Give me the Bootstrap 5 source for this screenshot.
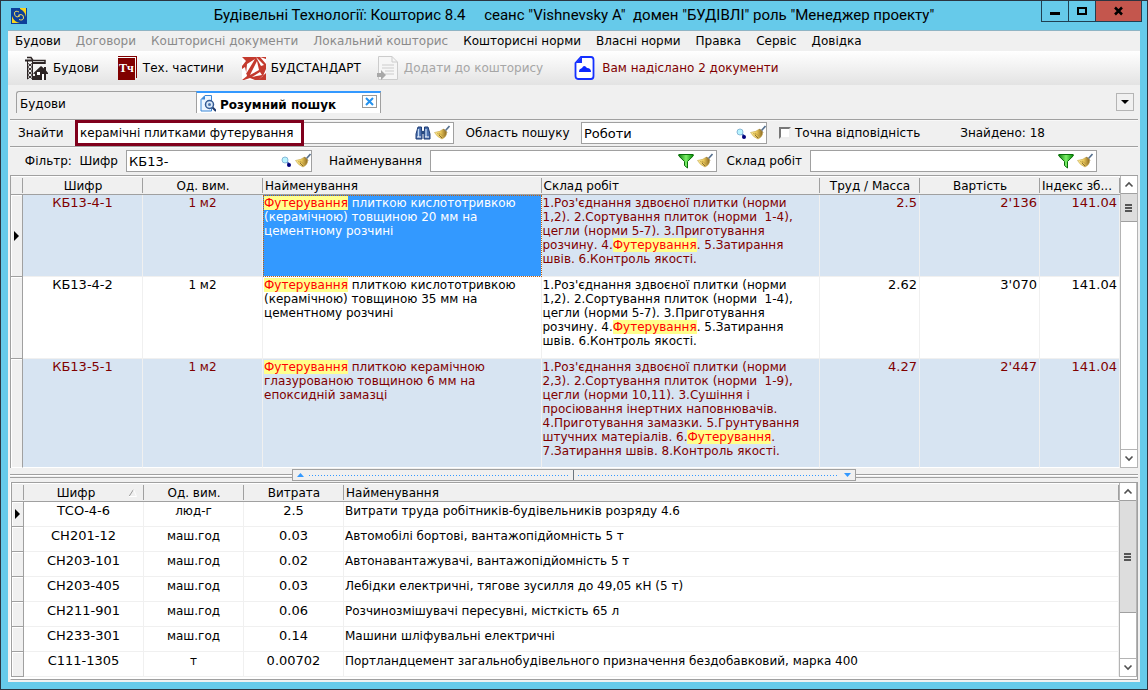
<!DOCTYPE html>
<html lang="uk">
<head>
<meta charset="utf-8">
<meta name="viewport" content="width=device-width, initial-scale=1">
<title>Будівельні Технології: Кошторис 8.4</title>
<link href="https://cdn.jsdelivr.net/npm/bootstrap@5.3.0/dist/css/bootstrap.min.css" rel="stylesheet">
<style>
:root{--line:#a0a0a0;--face:#f0f0f0;--sky:#66caea;--row:#d7e4f2;--wine:#800000}
body{font:12px/14px "DejaVu Sans",Verdana,sans-serif;color:#000;background:var(--sky)}
button,input{font:inherit;color:inherit}
.window{border:1px solid #2b3440;background:var(--sky);padding:0 7px 7px}
.titlebar{height:29px}
.titlebar h1{font:15px/29px Roboto,"Open Sans",sans-serif;white-space:pre;margin:0}
.winbtns{right:5px;top:0}
.winbtns button{height:21px;width:28px;padding:0;border:1px solid #1f3f52;border-top:0;background:transparent;margin-left:-1px}
.winbtns .close-btn{width:47px;background:#c4564d}
.client{background:var(--face);border-top:1px solid #8fb4c4;padding-bottom:2px}
.menubar{height:20px;padding:0 7px;gap:15px}
.menubar a{color:#000;text-decoration:none;white-space:nowrap}
.menubar a.off{color:#8a8a8a}
.tools{height:34px;background:linear-gradient(#fff,#e3e3e3)}
.tools button{border:0;background:none;padding:0;white-space:nowrap;gap:5px;margin-right:18px}
.tools button.wide{margin-right:30px}
.tools button:disabled{color:#a6a6a6}
.tools .notice{color:var(--wine)}
.tabs{height:34px;padding:6px 6px 0 8px}
.tab-item{height:22px;border:1px solid var(--line);border-bottom:0;padding:0 3px;background:var(--face);text-align:left;line-height:24px}
.tab-plain{width:180px;border-right:0;border-radius:3px 0 0 0}
.tab-on{width:185px;background:#fff;border-top:2px solid #39f;font-weight:bold}
.tab-x{width:15px;height:13px;border:1px solid #999;background:#fff;padding:0}
.drop{width:18px;height:18px;border:1px solid #b4b4b4;background:var(--face);padding:0;margin-top:2px}
.bar{display:grid;align-items:center;border-top:1px solid var(--line);margin:0 2px;box-shadow:inset 0 1px #f8f8f8}
.bar label,.bar output{white-space:nowrap}
.search{height:27px;grid-template-columns:65px 379fr 127px 186fr 371px}
.filter{height:29px;grid-template-columns:116px 186fr 118px 287fr 93px 287fr 41px}
.field{height:22px;border:1px solid var(--line);background:#fff;min-width:0}
.field input{border:0;background:transparent;padding:0 2px;min-width:0;height:20px;outline:0;font-size:13px}
.field .framed{flex:0 0 229px;height:26px;margin:-3px 0 -3px -1px;border:3px solid #80001c;background:#fff;font-size:12px}
.field button{border:0;background:none;padding:0;width:19px;height:16px}
.tick{appearance:none;width:12px;height:12px;background:#fff;border:2px solid;border-color:#777 #eee #eee #777;margin:0}
.pane{margin:0 2px;border-top:1px solid var(--line);border-left:1px solid var(--line)}
.grid{table-layout:fixed;border-collapse:separate;border-spacing:0;width:100%;background:#fff}
.grid th{height:19px;font-weight:normal;text-align:center;padding:1px 2px 0;background:linear-gradient(var(--line),var(--line)) right 2px/1px 15px no-repeat var(--face);border-bottom:1px solid var(--line);box-shadow:inset 0 1px #fff;white-space:nowrap;overflow:hidden}
.grid th.start{text-align:left}
.grid td{border-right:1px solid var(--face);border-bottom:1px solid var(--face);padding:1px 3px 0 1px;vertical-align:top;white-space:nowrap;overflow:hidden}
.grid td.sel{background:var(--face);border-right:1px solid var(--line);border-bottom:1px solid var(--line);box-shadow:inset 1px 1px #fff;padding:0;vertical-align:middle}
.grid td.c{text-align:center;padding-left:2px;padding-right:2px}.grid td.r{text-align:right;padding-right:2px}
.grid td.num{font-size:13px}
.norms td{height:82px}
.norms tr.alt td:not(.sel){background:var(--row);color:var(--wine)}
.norms tr.last td{height:109px;border-bottom-color:#fff}
.norms tr td.current:not(.sel){background:#39f;color:#fff;outline:1px dotted #c06010;outline-offset:-1px}
.hit{background:#ffff8c;color:#f00}
.res td{height:25px;padding-top:2px}
.scroller{width:18px;flex:none;background:#fff;border:1px solid #b4b4b4;border-top:0}
.scroller button{height:18px;width:16px;padding:0;border:0;background:#fff;line-height:0}
.scroller .up{border-bottom:1px solid var(--line)}
.scroller .down{border-top:1px solid #b4b4b4}
.thumb{height:28px;background:#ddd;border-bottom:1px solid var(--line);color:#555}
.thumb.long{height:112px}
.split{height:14px;margin:0 2px;background:linear-gradient(var(--line),var(--line)) 0 6px/100% 1px no-repeat,linear-gradient(#fff,#fff) 0 7px/100% 1px no-repeat,linear-gradient(var(--line),var(--line)) 0 9px/100% 1px no-repeat}
.grip{width:50%;height:12px;margin-top:1px;border:1px solid var(--line);background:var(--face)}
.grip span{height:10px;gap:5px}
.grip i{flex:1;height:1px;background:repeating-linear-gradient(90deg,#39f 0 1px,transparent 1px 3px)}
.lower{margin:0 2px;border:1px solid var(--line);border-top:0;border-left-color:#fff;background:#fff;padding:0 0 2px}
.lower .pane{margin:0}
svg{display:block;flex:none}
</style>
</head>
<body>
<svg width="0" height="0" class="position-absolute" aria-hidden="true">
<defs>
<linearGradient id="gold" x1="0" x2="1"><stop offset="0" stop-color="#fff0a0"/><stop offset=".5" stop-color="#ecca5c"/><stop offset="1" stop-color="#8d6a20"/></linearGradient>
<linearGradient id="leaf" x1="0" x2="1"><stop offset="0" stop-color="#0b7d0b"/><stop offset=".5" stop-color="#7df06a"/><stop offset="1" stop-color="#048a04"/></linearGradient>
<symbol id="broom" viewBox="0 0 16 16"><path d="M15.500 1 11.500 5.500" stroke="#56708e" stroke-width="1.600"/><path d="M9.500 4 12.500 7V9Q12 12 8 14Q3 12 .5 7.500Q6 7 9.500 4Z" fill="url(#gold)" stroke="#c2a550" stroke-width=".6"/><path d="M9.500 4 13 7.500M5 10 8 13" stroke="#7b6130" stroke-width=".9" fill="none"/><path d="M3 8.500 6 9.500M5 8 9 11" stroke="#b8953a" stroke-width=".7"/></symbol>
<symbol id="funnel" viewBox="0 0 16 16"><path d="M.8 1.500H15.200V3L9.500 8.500V15L6.500 12.500V8.500L.8 3Z" fill="url(#leaf)" stroke="#087008"/></symbol>
<symbol id="lens" viewBox="0 0 16 16"><path d="M9 9 11 11" stroke="#4a6cc0" stroke-width="2"/><circle cx="11" cy="12" r="2" fill="#00007b"/><circle cx="7" cy="7" r="3" fill="#b8f4ff" stroke="#86b8d8"/></symbol>
<symbol id="binoc" viewBox="0 0 16 16"><path d="M3 2H6.500V5L7 7V14H1V9Z M9.500 2H13L15 9V14H9V7L9.500 5Z" fill="#4a6fae" stroke="#1e3c74"/><path d="M6.500 6H9.500V9H6.500Z" fill="#27497f"/><path d="M3.500 4V12M11 4V12" stroke="#c6dcf5" stroke-width="1.300"/><path d="M2 12H6M10 12H14" stroke="#fff"/></symbol>
<symbol id="chev" viewBox="0 0 16 17"><path d="M4.500 10.500 8 7 11.500 10.500" fill="none" stroke="#505050" stroke-width="1.600"/></symbol>
<symbol id="mark-row" viewBox="0 0 6 10"><path d="M0 0V10L5 5Z"/></symbol>
</defs>
</svg>

<div class="window d-flex flex-column min-vh-100 position-relative">
<header class="titlebar d-flex align-items-center justify-content-center">
<svg class="position-absolute start-0 ms-2" width="18" height="16" viewBox="-2 0 18 16"><path fill="#0c3f9a" d="M0 0H16V16H0Z"/><path fill="#f7d41c" d="M9 0H15V9Q14 3 9 1ZM1 8V15H9Q3 14 1 8Z"/><path d="M8 4Q4 2 3.500 5T6 9Q9 9 8 6.500M8 11.500Q12 13 12.500 10T10 6.500Q7 6.500 8 9" fill="none" stroke="#f0d860"/></svg>
<h1>Будівельні Технології: Кошторис 8.4     сеанс "Vishnevsky A"  домен "БУДІВЛІ" роль "Менеджер проекту"</h1>
<div class="winbtns position-absolute d-flex">
<button type="button" aria-label="Згорнути"><svg width="26" height="20"><path d="M8 11H18V14H8Z"/></svg></button>
<button type="button" aria-label="Розгорнути"><svg width="26" height="20"><path d="M9 7H17V13H9Z" fill="none" stroke="#000" stroke-width="2"/></svg></button>
<button type="button" class="close-btn" aria-label="Закрити"><svg width="45" height="20"><path d="M19 6.500 26 13.500M26 6.500 19 13.500" stroke="#000" stroke-width="2.500"/></svg></button>
</div>
</header>

<main class="client flex-grow-1 d-flex flex-column">
<nav class="menubar d-flex align-items-center">
<a href="#">Будови</a><a href="#" class="off">Договори</a><a href="#" class="off">Кошторисні документи</a><a href="#" class="off">Локальний кошторис</a><a href="#">Кошторисні норми</a><a href="#">Власні норми</a><a href="#">Правка</a><a href="#">Сервіс</a><a href="#">Довідка</a>
</nav>

<div class="tools d-flex align-items-center ps-3">
<button type="button" class="d-flex align-items-center"><svg width="24" height="24" viewBox="0 0 24 24"><g fill="none" stroke="#2c2424" stroke-width="1"><path d="M3.500 4V23M8.500 4V23M3.500 7 8.500 11 3.500 15 8.500 19 3.500 23M8.500 7 3.500 11 8.500 15 3.500 19 8.500 23"/><path d="M3 1.500H7L9 4.500H21V8" stroke-width="1.500"/><path d="M1 4.500H8M9 7H21" stroke-width="2"/></g><path d="M9 17.500 17 10 20 12.500V11H22V14.500L24 17V18H22V24H11V18ZM8 20H11V24H8Z" fill="#2c2424"/><path d="M13 16H16V19H13ZM18 18H20V24H18Z" fill="#fff"/></svg>Будови</button>
<button type="button" class="d-flex align-items-center"><svg width="21" height="24" viewBox="0 0 21 24"><path fill="#800000" d="M1 0H20V22H19V1H1ZM1 2H18V24H1Z"/><text x="2" y="16" font-family="Liberation Serif,serif" font-size="12" font-weight="bold" fill="#fff">Тч</text></svg>Тех. частини</button>
<button type="button" class="d-flex align-items-center me-3"><svg width="24" height="24" viewBox="0 0 24 24"><path d="M0 1H24V24H0Z" fill="#c43a2e"/><path d="M0 1 4 5 0 10ZM14 1 22 9 19 10ZM24 3V8L18 1ZM0 13 3 11 5 20 0 24ZM2 24 8 22 13 24ZM16 24 24 17V13L21 20ZM13 3 5 8 4 18ZM15 5 17 14 8 19ZM18 16 20 19 10 21Z" fill="#fff"/></svg>БУДСТАНДАРТ</button>
<button type="button" disabled class="wide d-flex align-items-center"><svg width="22" height="24" viewBox="0 0 22 24"><path d="M1.500 .5H15L20.500 6V23.500H1.500Z" fill="#f6f6f6" stroke="#ccc"/><path d="M15 .5V6H20M5 9H17M5 12H17M8 15H17M8 18H17" fill="none" stroke="#ccc"/><path d="M0 17H4V14L9 19 4 24V21H0Z" fill="#a8a8a8"/></svg>Додати до кошторису</button>
<button type="button" class="notice d-flex align-items-center"><svg width="24" height="24" viewBox="-1 0 24 24"><path d="M7 1H17Q19.500 1 19.500 4V20Q19.500 23 17 23H4Q1.500 23 1.500 20V7Z" fill="#fff" stroke="#1430ff" stroke-width="1.800"/><path d="M8 1V7H2Z" fill="#1430ff"/><path d="M5 15Q5 13 8 12Q10 8 13 12Q17 12 17 16H5Z" fill="#0a28ff"/></svg>Вам надіслано 2 документи</button>
</div>

<div class="tabs d-flex align-items-start">
<button type="button" class="tab-item tab-plain">Будови</button>
<div class="tab-item tab-on d-flex align-items-center"><svg width="16" height="17" viewBox="0 0 16 17"><path d="M5 .5H11.500V16H1V4.500Z" fill="#eef6ff" stroke="#3a87d6"/><path d="M1 4.500H5V.5" fill="#3a87d6"/><path d="M12 12 16 16" stroke="#1f3a6d" stroke-width="2"/><circle cx="9.500" cy="9.500" r="4" fill="#d9e8f8" stroke="#345a92" stroke-width="1.500"/><circle cx="9.500" cy="9.500" r="1.500" fill="#4f76ac"/></svg><span class="px-1 pt-1 flex-grow-1">Розумний пошук</span><button type="button" class="tab-x mb-1" aria-label="Закрити вкладку"><svg width="13" height="11"><path d="M3 2 10 9M10 2 3 9" stroke="#2492ee" stroke-width="2"/></svg></button></div>
<button type="button" class="drop ms-auto" aria-label="Список вкладок"><svg width="16" height="16"><path d="M4 6H12L8 10Z"/></svg></button>
</div>

<div class="bar search">
<label for="find" class="ps-2">Знайти</label>
<div class="field d-flex align-items-center"><input id="find" class="framed" value="керамічні плитками футерування"><button type="button" class="ms-auto" aria-label="Шукати"><svg width="16" height="16"><use href="#binoc"/></svg></button><button type="button" aria-label="Очистити"><svg width="16" height="16"><use href="#broom"/></svg></button></div>
<label for="area" class="text-center">Область пошуку</label>
<div class="field d-flex align-items-center"><input id="area" class="flex-grow-1" value="Роботи"><button type="button" aria-label="Вибрати"><svg width="16" height="16"><use href="#lens"/></svg></button><button type="button" aria-label="Очистити"><svg width="16" height="16"><use href="#broom"/></svg></button></div>
<div class="d-flex align-items-center ps-2"><input type="checkbox" class="tick ms-1" id="exact"><label for="exact" class="ms-1">Точна відповідність</label><output class="ms-4 ps-3">Знайдено: 18</output></div>
</div>

<div class="bar filter">
<label for="code" class="text-end pe-2">Фільтр:&nbsp; Шифр</label>
<div class="field d-flex align-items-center"><input id="code" class="flex-grow-1" value="КБ13-"><button type="button" aria-label="Вибрати"><svg width="16" height="16"><use href="#lens"/></svg></button><button type="button" aria-label="Очистити"><svg width="16" height="16"><use href="#broom"/></svg></button></div>
<label for="name" class="text-end pe-2">Найменування</label>
<div class="field d-flex align-items-center"><input id="name" class="flex-grow-1"><button type="button" aria-label="Фільтрувати"><svg width="16" height="16"><use href="#funnel"/></svg></button><button type="button" aria-label="Очистити"><svg width="16" height="16"><use href="#broom"/></svg></button></div>
<label for="works" class="text-end pe-2">Склад робіт</label>
<div class="field d-flex align-items-center"><input id="works" class="flex-grow-1"><button type="button" aria-label="Фільтрувати"><svg width="16" height="16"><use href="#funnel"/></svg></button><button type="button" aria-label="Очистити"><svg width="16" height="16"><use href="#broom"/></svg></button></div>
</div>

<section class="pane d-flex">
<table class="grid norms">
<colgroup><col style="width:12px"><col style="width:120px"><col style="width:120px"><col><col><col style="width:100px"><col style="width:120px"><col style="width:80px"></colgroup>
<thead><tr><th></th><th>Шифр</th><th>Од. вим.</th><th class="start">Найменування</th><th class="start">Склад робіт</th><th>Труд / Масса</th><th>Вартість</th><th class="start">Індекс зб...</th></tr></thead>
<tbody>
<tr class="alt"><td class="sel"><svg class="mx-auto" width="6" height="10"><use href="#mark-row"/></svg></td><td class="c num">КБ13-4-1</td><td class="c">1 м2</td><td class="current"><span class="hit">Футерування</span> плиткою кислототривкою<br>(керамічною) товщиною 20 мм на<br>цементному розчині</td><td>1.Роз'єднання здвоєної плитки (норми<br>1,2). 2.Сортування плиток (норми&nbsp; 1-4),<br>цегли (норми 5-7). 3.Приготування<br>розчину. 4.<span class="hit">Футерування</span>. 5.Затирання<br>швів. 6.Контроль якості.</td><td class="r num">2.5</td><td class="r num">2'136</td><td class="r num">141.04</td></tr>
<tr><td class="sel"></td><td class="c num">КБ13-4-2</td><td class="c">1 м2</td><td><span class="hit">Футерування</span> плиткою кислототривкою<br>(керамічною) товщиною 35 мм на<br>цементному розчині</td><td>1.Роз'єднання здвоєної плитки (норми<br>1,2). 2.Сортування плиток (норми&nbsp; 1-4),<br>цегли (норми 5-7). 3.Приготування<br>розчину. 4.<span class="hit">Футерування</span>. 5.Затирання<br>швів. 6.Контроль якості.</td><td class="r num">2.62</td><td class="r num">3'070</td><td class="r num">141.04</td></tr>
<tr class="alt last"><td class="sel"></td><td class="c num">КБ13-5-1</td><td class="c">1 м2</td><td><span class="hit">Футерування</span> плиткою керамічною<br>глазурованою товщиною 6 мм на<br>епоксидній замазці</td><td>1.Роз'єднання здвоєної плитки (норми<br>2,3). 2.Сортування плиток (норми&nbsp; 1-9),<br>цегли (норми 10,11). 3.Сушіння і<br>просіювання інертних наповнювачів.<br>4.Приготування замазки. 5.Грунтування<br>штучних матеріалів. 6.<span class="hit">Футерування</span>.<br>7.Затирання швів. 8.Контроль якості.</td><td class="r num">4.27</td><td class="r num">2'447</td><td class="r num">141.04</td></tr>
</tbody>
</table>
<div class="scroller d-flex flex-column"><button type="button" class="up" aria-label="Вгору"><svg width="16" height="17"><use href="#chev"/></svg></button><div class="thumb d-flex align-items-center justify-content-center"><svg width="8" height="8" fill="currentColor"><path d="M0 0H7V2H0ZM0 3H7V5H0ZM0 6H7V8H0Z"/></svg></div><button type="button" class="down mt-auto" aria-label="Вниз"><svg width="16" height="17" style="transform:rotate(180deg)"><use href="#chev"/></svg></button></div>
</section>

<div class="split d-flex justify-content-center"><div class="grip d-flex"><span class="d-flex align-items-center w-50 px-1 border-end border-secondary"><svg width="7" height="4"><path d="M3.500 0 7 4H0Z" fill="#39f"/></svg><i></i></span><span class="d-flex align-items-center w-50 px-1"><i></i><svg width="7" height="4"><path d="M0 0H7L3.500 4Z" fill="#39f"/></svg></span></div></div>

<section class="lower flex-grow-1">
<div class="pane d-flex h-100">
<div class="flex-grow-1 bg-white">
<table class="grid res">
<colgroup><col style="width:12px"><col style="width:120px"><col style="width:100px"><col style="width:100px"><col></colgroup>
<thead><tr><th></th><th><div class="d-flex align-items-center justify-content-center position-relative pe-3">Шифр<svg class="position-absolute end-0 me-1" width="9" height="8"><path d="M0 7.500 4.500 .5" stroke="#999"/><path d="M4.500 .5 7.500 7.500H0" stroke="#fff" fill="none"/></svg></div></th><th>Од. вим.</th><th>Витрата</th><th class="start">Найменування</th></tr></thead>
<tbody>
<tr><td class="sel"><svg class="mx-auto" width="6" height="10"><use href="#mark-row"/></svg></td><td class="c num">ТСО-4-6</td><td class="c">люд-г</td><td class="c num">2.5</td><td>Витрати труда робітників-будівельників розряду 4.6</td></tr>
<tr><td class="sel"></td><td class="c num">СН201-12</td><td class="c">маш.год</td><td class="c num">0.03</td><td>Автомобілі бортові, вантажопідйомність 5 т</td></tr>
<tr><td class="sel"></td><td class="c num">СН203-101</td><td class="c">маш.год</td><td class="c num">0.02</td><td>Автонавантажувачі, вантажопідйомність 5 т</td></tr>
<tr><td class="sel"></td><td class="c num">СН203-405</td><td class="c">маш.год</td><td class="c num">0.03</td><td>Лебідки електричні, тягове зусилля до 49,05 кН (5 т)</td></tr>
<tr><td class="sel"></td><td class="c num">СН211-901</td><td class="c">маш.год</td><td class="c num">0.06</td><td>Розчинозмішувачі пересувні, місткість 65 л</td></tr>
<tr><td class="sel"></td><td class="c num">СН233-301</td><td class="c">маш.год</td><td class="c num">0.14</td><td>Машини шліфувальні електричні</td></tr>
<tr><td class="sel"></td><td class="c num">С111-1305</td><td class="c">т</td><td class="c num">0.00702</td><td>Портландцемент загальнобудівельного призначення бездобавковий, марка 400</td></tr>
</tbody>
</table>
</div>
<div class="scroller d-flex flex-column"><button type="button" class="up" aria-label="Вгору"><svg width="16" height="17"><use href="#chev"/></svg></button><div class="thumb long d-flex align-items-center justify-content-center"><svg width="8" height="8" fill="currentColor"><path d="M0 0H7V2H0ZM0 3H7V5H0ZM0 6H7V8H0Z"/></svg></div><button type="button" class="down mt-auto" aria-label="Вниз"><svg width="16" height="17" style="transform:rotate(180deg)"><use href="#chev"/></svg></button></div>
</div>
</section>
</main>
</div>
<script src="https://cdn.jsdelivr.net/npm/bootstrap@5.3.0/dist/js/bootstrap.bundle.min.js"></script>
</body>
</html>
